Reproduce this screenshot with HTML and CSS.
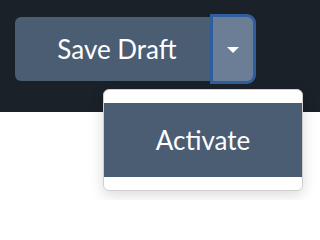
FILE: index.html
```html
<!DOCTYPE html>
<html>
<head>
<meta charset="utf-8">
<link rel="stylesheet" href="styles.css">
</head>
<body>
<div class="page">
  <div class="bar">
    <div class="btn-group">
      <button class="btn-main">Save Draft</button>
      <button class="btn-toggle"><span class="caret"></span></button>
      <div class="menu">
        <div class="menu-item">Activate</div>
      </div>
    </div>
  </div>
  <div class="below"></div>
</div>
</body>
</html>
```
FILE: styles.css
```css
html, body {
  margin: 0;
  padding: 0;
  background: #ffffff;
  font-family: Lato, "Liberation Sans", sans-serif;
}
.page {
  min-height: 200px;
  display: flex;
  flex-direction: column;
}
.bar {
  background: #1b2129;
  height: 112px;
  padding: 17px 15px 0;
  box-sizing: border-box;
  flex: none;
}
.below {
  height: 88px;
  background: #ffffff;
}
.btn-group {
  position: relative;
  display: flex;
  width: 238px;
  height: 64px;
}
.btn-main {
  width: 198px;
  height: 64px;
  border: 0;
  margin: 0;
  padding: 0 0 0 6px;
  background: #4a5d73;
  color: #ffffff;
  font-family: inherit;
  font-size: 26px;
  border-radius: 6px 0 0 6px;
}
.btn-toggle {
  position: relative;
  z-index: 1;
  width: 40px;
  height: 64px;
  border: 0;
  margin: 0;
  padding: 0;
  background: #6b7e96;
  border-radius: 0 6px 6px 0;
  box-shadow: 0 0 0 3px #2f5e9e;
  display: flex;
  align-items: center;
  justify-content: center;
}
.caret {
  width: 0;
  height: 0;
  border-left: 6px solid transparent;
  border-right: 6px solid transparent;
  border-top: 6px solid #ffffff;
  margin-top: 2px;
}
.menu {
  position: absolute;
  left: 88px;
  top: 72px;
  width: 200px;
  box-sizing: border-box;
  background: #ffffff;
  border: 1px solid #cfcfcf;
  border-radius: 6px;
  padding: 13px 0;
  box-shadow: 0 4px 14px rgba(0, 0, 0, 0.15);
  z-index: 2;
}
.menu-item {
  height: 74px;
  background: #4a5d73;
  color: #ffffff;
  font-size: 26px;
  display: flex;
  align-items: center;
  justify-content: center;
}
```
